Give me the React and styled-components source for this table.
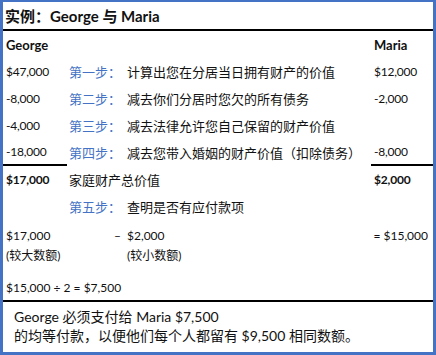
import React from "react"
import styled, { createGlobalStyle } from "styled-components"

const GlobalStyle = createGlobalStyle`
  html, body {
    margin: 0;
    padding: 0;
    background: #ffffff;
  }
  body {
    font-family: Lato, "Noto Sans CJK SC", sans-serif;
    color: #111;
  }
`

const Frame = styled.div`
  width: 436px;
  height: 355px;
  box-sizing: border-box;
  border: 3px solid #4472c4;
  border-top-width: 2px;
  display: flex;
  flex-direction: column;
  overflow: hidden;
`

const Title = styled.div`
  height: 27px;
  padding-left: 2px;
  display: flex;
  align-items: center;
  font-size: 15px;
  font-weight: 700;
  border-bottom: 2px solid #000;
`

const Row = styled.div`
  display: grid;
  grid-template-columns: 64px 60px 1fr 62px;
  height: ${(p) => p.$h || 27}px;
  align-items: center;
`

const Cell = styled.div`
  height: 100%;
  box-sizing: border-box;
  display: flex;
  align-items: center;
  padding-left: ${(p) => (p.$pad != null ? p.$pad : 3)}px;
  font-size: ${(p) => (p.$cjk ? 13 : 12)}px;
  font-weight: ${(p) => (p.$bold ? 700 : 400)};
  letter-spacing: ${(p) => (p.$cjk ? 0 : -0.2)}px;
  grid-column: ${(p) => p.$span || "auto"};
  border-bottom: ${(p) => (p.$under ? "2px solid #000" : "none")};
  white-space: nowrap;
`

const Step = styled(Cell)`
  color: #4472c4;
  font-size: 13px;
  letter-spacing: 0;
`

const Compare = styled.div`
  display: grid;
  grid-template-columns: 64px 60px 1fr 62px;
  padding-top: 6px;
  height: 46px;
  box-sizing: border-box;
  line-height: 20px;
  font-size: 12px;
`

const Stack = styled.div`
  display: flex;
  flex-direction: column;
  padding-left: 3px;
  white-space: nowrap;
  font-size: ${(p) => (p.$cjk ? 13 : 12)}px;
`

const Minus = styled.div`
  text-align: right;
  padding-right: 6px;
  font-size: 12px;
`

const Total = styled.div`
  text-align: right;
  padding-right: 5px;
  white-space: nowrap;
`

const Division = styled.div`
  height: 36px;
  box-sizing: border-box;
  padding: 12px 0 0 3px;
  line-height: 20px;
  font-size: 12px;
  border-bottom: 2px solid #000;
`

const Note = styled.div`
  padding: 5px 0 0 11px;
  font-size: 14px;
  line-height: 19px;
`

const steps = [
  { left: "$47,000", step: "第一步：", text: "计算出您在分居当日拥有财产的价值", right: "$12,000" },
  { left: "-8,000", step: "第二步：", text: "减去你们分居时您欠的所有债务", right: "-2,000" },
  { left: "-4,000", step: "第三步：", text: "减去法律允许您自己保留的财产价值", right: "" },
  { left: "-18,000", step: "第四步：", text: "减去您带入婚姻的财产价值（扣除债务）", right: "-8,000", under: true },
]

export default function App() {
  return (
    <>
      <GlobalStyle />
      <Frame>
        <Title>实例：George 与 Maria</Title>
        <Row>
          <Cell $bold $cjk>George</Cell>
          <Cell />
          <Cell />
          <Cell $bold $cjk>Maria</Cell>
        </Row>
        {steps.map((s) => (
          <Row key={s.step}>
            <Cell $under={s.under}>{s.left}</Cell>
            <Step $pad={2}>{s.step}</Step>
            <Cell $cjk $pad={0}>{s.text}</Cell>
            <Cell $under={s.under}>{s.right}</Cell>
          </Row>
        ))}
        <Row>
          <Cell $bold>$17,000</Cell>
          <Cell $cjk $pad={2} $span="2 / 4">家庭财产总价值</Cell>
          <Cell $bold>$2,000</Cell>
        </Row>
        <Row>
          <Cell />
          <Step $pad={2}>第五步：</Step>
          <Cell $cjk $pad={0}>查明是否有应付款项</Cell>
          <Cell />
        </Row>
        <Compare>
          <Stack>
            <span>$17,000</span>
            <span>(较大数额)</span>
          </Stack>
          <Minus>–</Minus>
          <Stack style={{ paddingLeft: 0 }}>
            <span>$2,000</span>
            <span>(较小数额)</span>
          </Stack>
          <Total>= $15,000</Total>
        </Compare>
        <Division>$15,000 ÷ 2 = $7,500</Division>
        <Note>
          George 必须支付给 Maria $7,500
          <br />
          的均等付款，以便他们每个人都留有 $9,500 相同数额。
        </Note>
      </Frame>
    </>
  )
}
